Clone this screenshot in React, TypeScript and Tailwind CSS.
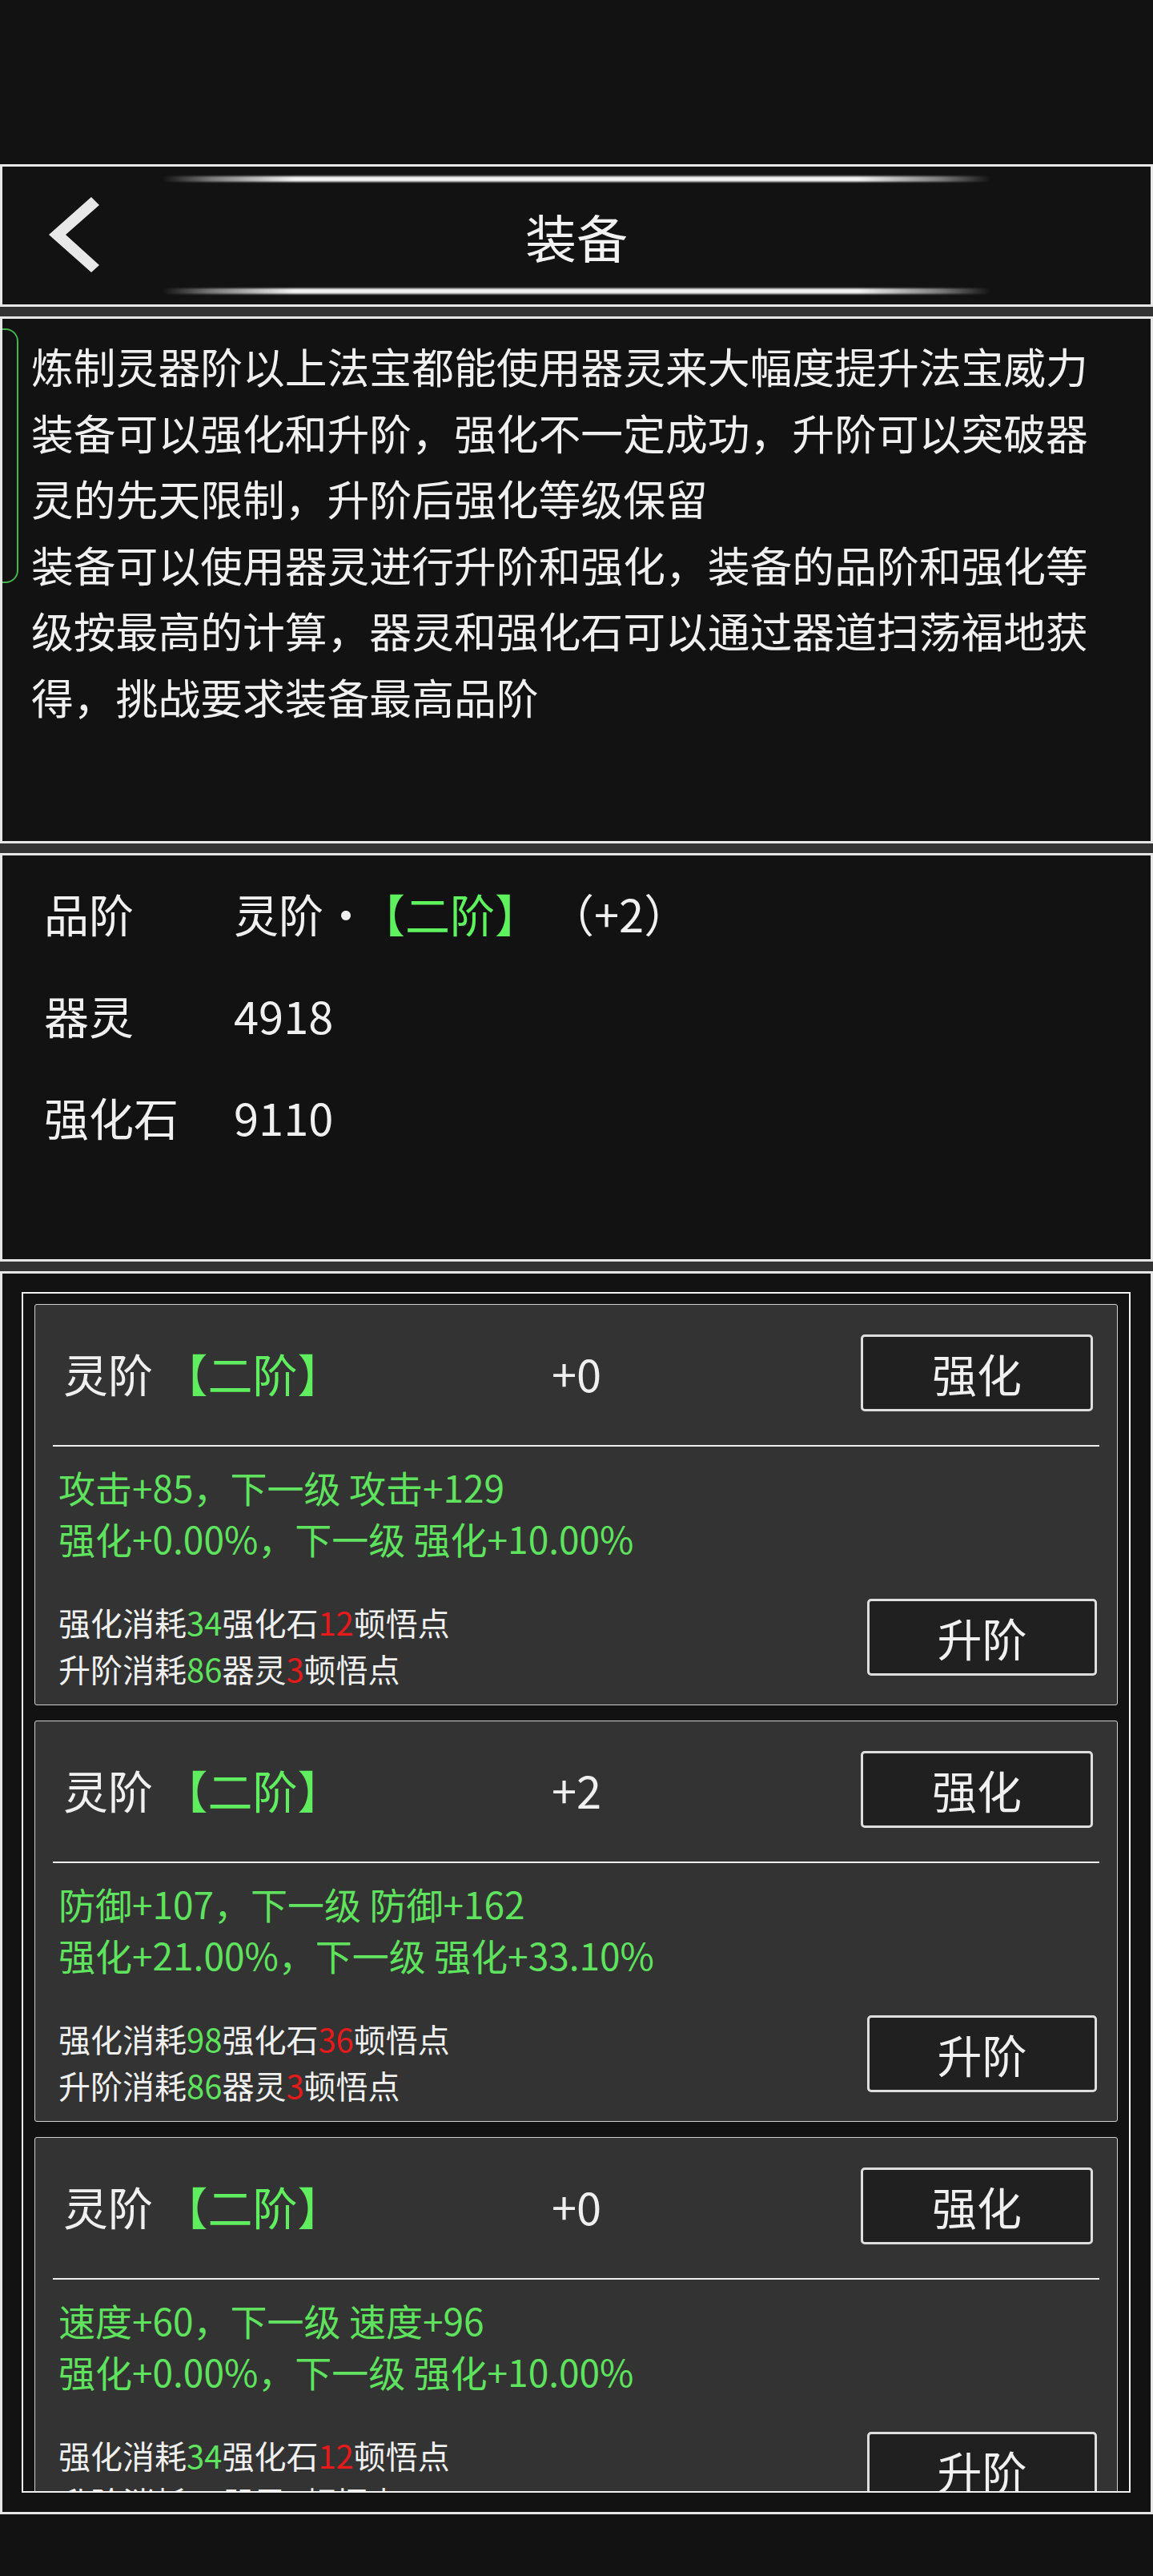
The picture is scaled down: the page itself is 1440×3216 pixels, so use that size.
import React from 'react'

const GREEN = 'text-[#5fe35f]'

function GlowLine() {
  return (
    <div className="mx-auto h-[7px] w-[1036px] rounded-full bg-[linear-gradient(90deg,transparent_0%,#7a7a7a_6%,#f2f2f2_16%,#f2f2f2_84%,#7a7a7a_94%,transparent_100%)] blur-[1.2px]" />
  )
}

function Header() {
  return (
    <div className="flex h-[178px] flex-col border-[3px] border-[#e8e8e8] bg-[#121212] pt-[12px] pb-[13px]">
      <GlowLine />
      <div className="grid flex-1 grid-cols-[1fr_auto_1fr] items-center">
        <div className="pl-[56px]">
          <svg width="70" height="100" viewBox="60 245 70 100" className="block">
            <polygon points="115,247 125,257 83,294 125,332 115,341 62,294" fill="#e8e8e8" />
          </svg>
        </div>
        <span className="text-[64px] leading-none text-[#f2f2f2]">装备</span>
        <div />
      </div>
      <GlowLine />
    </div>
  )
}

function Intro() {
  return (
    <div className="relative h-[658px] overflow-hidden border-[3px] border-[#e6e6e6] bg-[#121212] pt-[17px] pl-[36px]">
      <div className="absolute top-[12px] left-[-24px] h-[318px] w-[44px] rounded-[16px] border-2 border-[#3fb54b]" />
      <div className="w-[1340px] text-[52.8px] leading-[82.6px] text-[#f0f0f0]">
        <p>炼制灵器阶以上法宝都能使用器灵来大幅度提升法宝威力</p>
        <p>装备可以强化和升阶，强化不一定成功，升阶可以突破器灵的先天限制，升阶后强化等级保留</p>
        <p>装备可以使用器灵进行升阶和强化，装备的品阶和强化等级按最高的计算，器灵和强化石可以通过器道扫荡福地获得，挑战要求装备最高品阶</p>
      </div>
    </div>
  )
}

function Stats() {
  const rows: { label: string; value: React.ReactNode }[] = [
    {
      label: '品阶',
      value: (
        <>
          灵阶·<span className="ml-[18px] text-[#5ef25e]">【二阶】</span>
          <span className="ml-[40px]">（+2）</span>
        </>
      ),
    },
    { label: '器灵', value: '4918' },
    { label: '强化石', value: '9110' },
  ]
  return (
    <div className="h-[510px] border-[3px] border-[#e6e6e6] bg-[#121212] pt-[8px] pl-[52px]">
      {rows.map((r) => (
        <div key={r.label} className="flex text-[56px] leading-[127px] text-[#f0f0f0]">
          <span className="w-[237px] shrink-0">{r.label}</span>
          <span>{r.value}</span>
        </div>
      ))}
    </div>
  )
}

type Item = {
  level: string
  stat: [string, string]
  cost: [string, string]
  upg: [string, string]
}

function GameButton({ label, className = '' }: { label: string; className?: string }) {
  return (
    <div
      className={`flex shrink-0 items-center justify-center rounded-[5px] border-[3px] border-[#dedede] bg-[#202020] text-[56px] leading-none text-[#f0f0f0] ${className}`}
    >
      {label}
    </div>
  )
}

function EquipCard({ item }: { item: Item }) {
  return (
    <div className="flex h-[501px] shrink-0 flex-col rounded-[3px] border border-[#cfcfcf] bg-[#333333]">
      <div className="flex h-[175px] items-center pr-[30px] pb-[6px] pl-[35px] text-[56px] leading-none text-[#f0f0f0]">
        <span className="w-[610px] shrink-0">
          灵阶 <span className="text-[#60ee60]">【二阶】</span>
        </span>
        <span>{item.level}</span>
        <GameButton label="强化" className="ml-auto h-[96px] w-[290px]" />
      </div>
      <div className="mx-[22px] h-[2px] bg-[#eeeeee]" />
      <div className={`pt-[18px] pl-[29px] text-[46px] leading-[64px] ${GREEN}`}>
        <p>{item.stat[0]}</p>
        <p>{item.stat[1]}</p>
      </div>
      <div className="mt-[44px] flex items-start justify-between pr-[25px] pl-[29px]">
        <div className="text-[40px] leading-[58px] text-[#f0f0f0]">
          <p>
            强化消耗<span className={GREEN}>{item.cost[0]}</span>强化石
            <span className="text-[#e61a1a]">{item.cost[1]}</span>顿悟点
          </p>
          <p>
            升阶消耗<span className={GREEN}>{item.upg[0]}</span>器灵
            <span className="text-[#e61a1a]">{item.upg[1]}</span>顿悟点
          </p>
        </div>
        <GameButton label="升阶" className="h-[96px] w-[287px]" />
      </div>
    </div>
  )
}

const items: Item[] = [
  {
    level: '+0',
    stat: ['攻击+85，下一级 攻击+129', '强化+0.00%，下一级 强化+10.00%'],
    cost: ['34', '12'],
    upg: ['86', '3'],
  },
  {
    level: '+2',
    stat: ['防御+107，下一级 防御+162', '强化+21.00%，下一级 强化+33.10%'],
    cost: ['98', '36'],
    upg: ['86', '3'],
  },
  {
    level: '+0',
    stat: ['速度+60，下一级 速度+96', '强化+0.00%，下一级 强化+10.00%'],
    cost: ['34', '12'],
    upg: ['86', '3'],
  },
]

function EquipList() {
  return (
    <div className="flex h-[1552px] flex-col border-[3px] border-[#e6e6e6] bg-[#121212] pt-[23px] pr-[25px] pb-[24px] pl-[24px]">
      <div className="flex flex-1 flex-col gap-[19px] overflow-hidden border-2 border-[#f0f0f0] px-[14px] pt-[13px]">
        {items.map((it, i) => (
          <EquipCard key={i} item={it} />
        ))}
      </div>
    </div>
  )
}

export default function App() {
  return (
    <div className="flex h-[3216px] w-[1440px] flex-col overflow-hidden bg-[#121212] [font-family:'Noto_Sans_CJK_SC','Noto_Sans',sans-serif]">
      <div className="h-[205px] shrink-0" />
      <div className="flex shrink-0 flex-col gap-[12px] bg-[#333333]">
        <Header />
        <Intro />
        <Stats />
        <EquipList />
      </div>
    </div>
  )
}
